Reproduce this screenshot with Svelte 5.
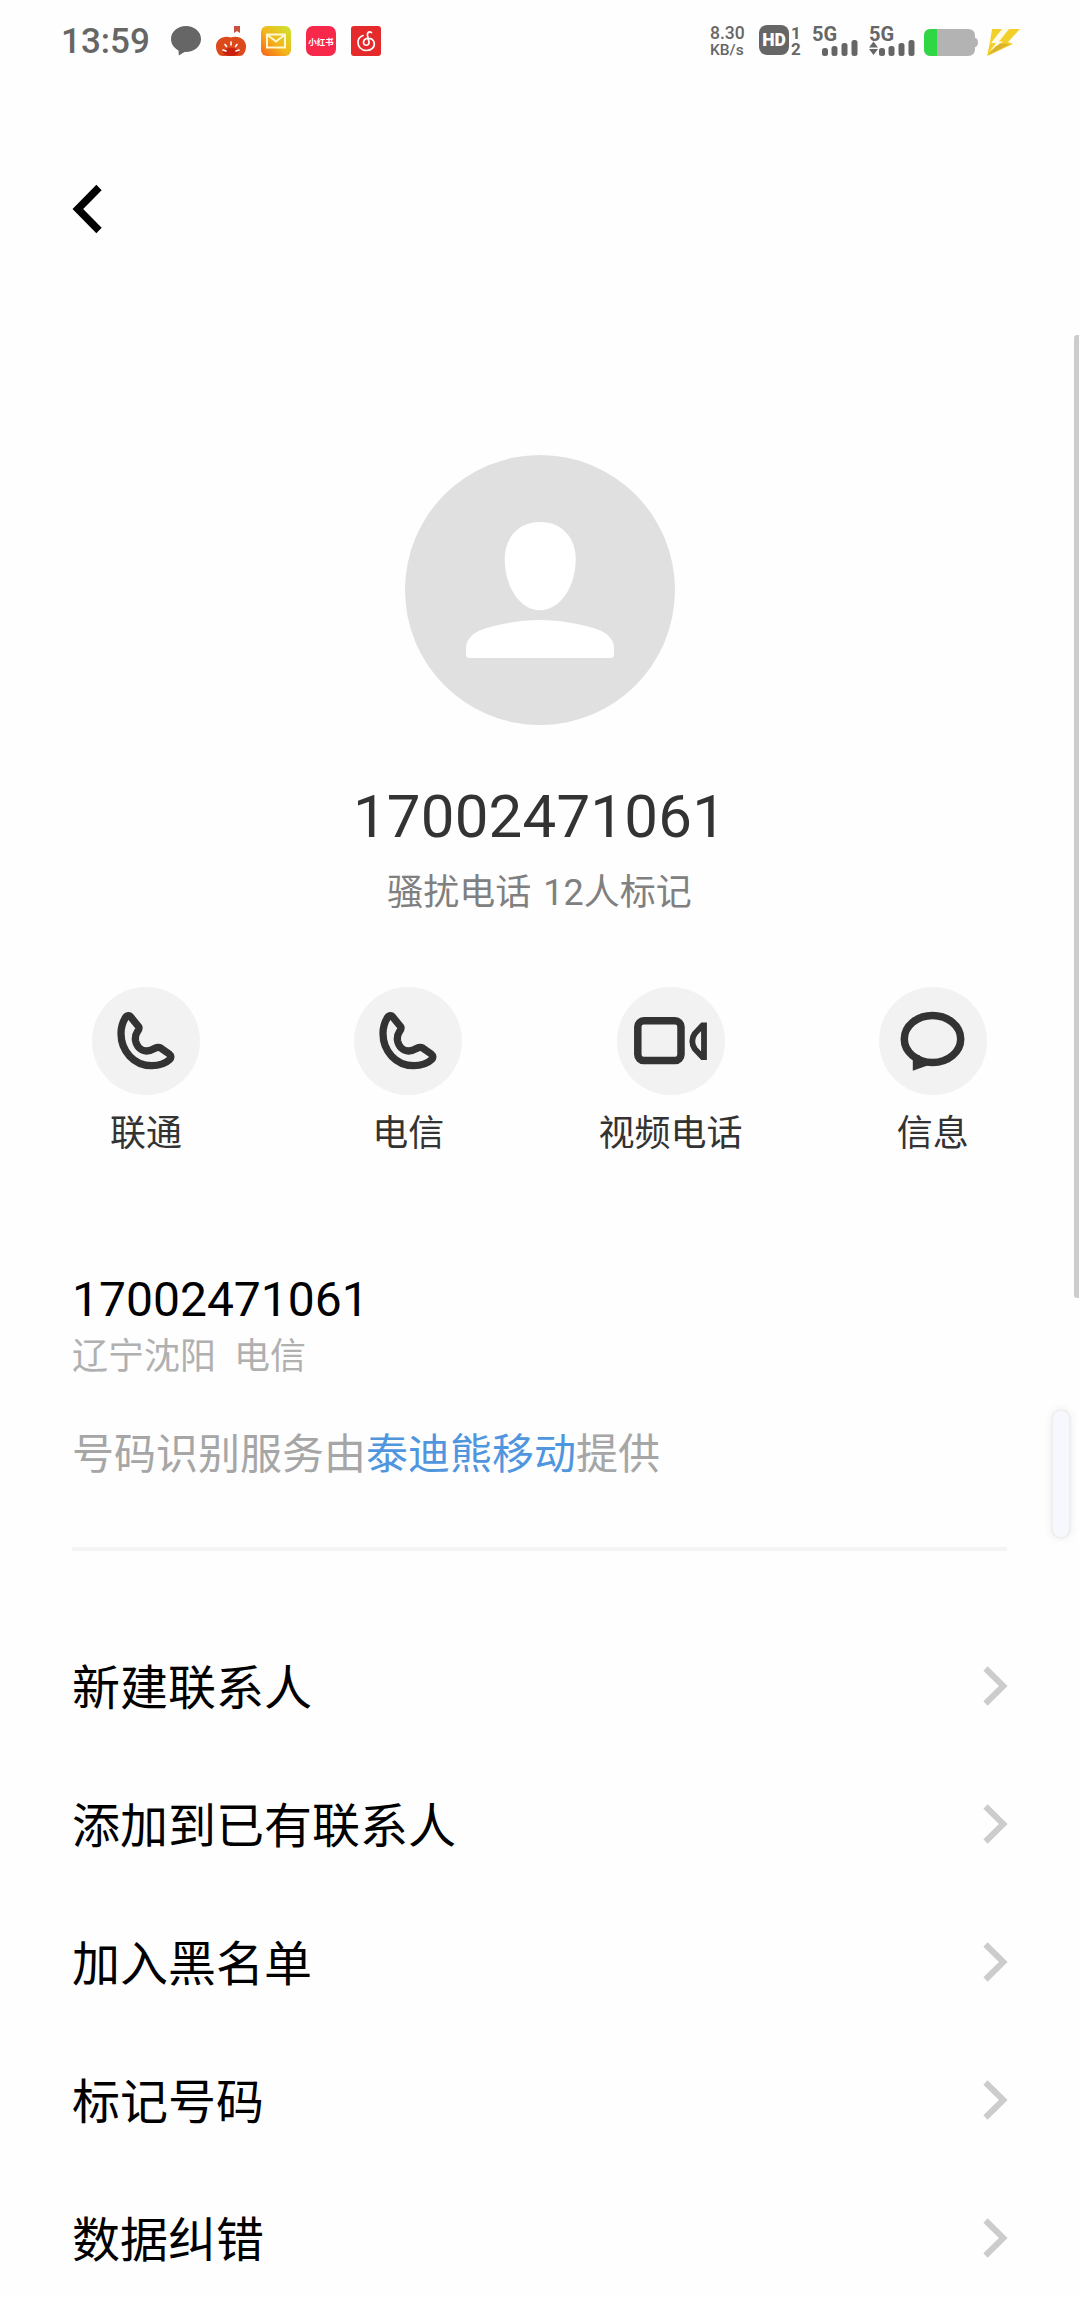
<script lang="ts">
  type ActionIcon = 'phone' | 'video' | 'message';

  const phoneNumber = '17002471061';

  const actions: { icon: ActionIcon; label: string }[] = [
    { icon: 'phone', label: '联通' },
    { icon: 'phone', label: '电信' },
    { icon: 'video', label: '视频电话' },
    { icon: 'message', label: '信息' }
  ];

  const menuItems = ['新建联系人', '添加到已有联系人', '加入黑名单', '标记号码', '数据纠错'];

  const bars = [
    { x: 10, h: 8 },
    { x: 19.5, h: 10 },
    { x: 29.5, h: 13 },
    { x: 39.5, h: 16 }
  ];
</script>

<div class="screen">
  <div class="status-bar">
    <span class="time">13:59</span>
    <div class="notifications">
      <svg width="30" height="30" viewBox="0 0 30 30">
        <path d="M15 0C6.700 0 0 5.600 0 13c0 5 3 9 7.500 11.500L7.800 29.500 13.500 26C23 26.500 30 20.500 30 13 30 5.600 23.300 0 15 0Z" fill="#666" />
      </svg>
      <svg width="32" height="30" viewBox="0 0 32 30">
        <path d="M19 0h6v7l-3-2-3 2z" fill="#c9503c" />
        <path d="M16 11.500C8 9 1 14 1 20c0 3 .5 5 1.500 6.500Q4 30 8 30h16q4 0 5.500-3.500C30.500 25 31 23 31 20c0-6-7-11-15-8.500Z" fill="#dc4a1c" />
        <ellipse cx="16" cy="26" rx="8" ry="4" fill="#c9210f" />
        <path d="M8 24l3 1M10 18.500l1.500 2M16 16v3M22 18.500l-1.500 2M24 24l-3 1" stroke="#fff" stroke-width="1.600" stroke-linecap="round" />
      </svg>
      <svg width="30" height="30" viewBox="0 0 30 30">
        <defs>
          <linearGradient id="mail" x1="0" y1="1" x2="1" y2="0">
            <stop offset="0" stop-color="#f6601c" />
            <stop offset="0.450" stop-color="#f5b21a" />
            <stop offset="1" stop-color="#c8e830" />
          </linearGradient>
        </defs>
        <rect width="30" height="30" rx="6" fill="url(#mail)" />
        <path d="M6 8.500h18v13H6zM6.500 9l8.500 6.500L23.500 9" fill="none" stroke="#fff8d0" stroke-width="2" />
      </svg>
      <svg width="30" height="30" viewBox="0 0 30 30">
        <rect width="30" height="30" rx="7" fill="#f8284a" />
        <text class="book" x="15" y="18.500" text-anchor="middle">小红书</text>
      </svg>
      <svg width="30" height="30" viewBox="0 0 30 30">
        <rect width="30" height="30" rx="3" fill="#e42a2a" />
        <path d="M20.500 6.500c-3-1.500-4.500.500-4 3l1.500 6.500c.5 4-5.500 4.500-5.500.5 0-5 8.500-6 10.500-.5 1.500 5-2.500 8.500-7.500 8.500-5.500 0-8.500-4-8.500-8 0-3.500 2-6 5-7" fill="none" stroke="#fff" stroke-width="1.700" stroke-linecap="round" />
      </svg>
    </div>

    <div class="indicators">
      <div class="speed">
        <span>8.30</span>
        <span class="unit">KB/s</span>
      </div>
      <div class="hd">
        <span class="badge">HD</span>
        <span class="sims"><span>1</span><span>2</span></span>
      </div>
      <div class="signal">
        <span class="network">5G</span>
        <svg width="46" height="16" viewBox="0 0 46 16">
          {#each bars as bar}
            <rect x={bar.x} y={16 - bar.h} width="6" height={bar.h} rx="2.500" fill="#666" />
          {/each}
        </svg>
      </div>
      <div class="signal">
        <span class="network">5G</span>
        <svg width="46" height="16" viewBox="0 0 46 16">
          <path d="M0 7.500l4.500-6L9 7.500zM0 9h9l-4.500 6z" fill="#666" />
          {#each bars as bar}
            <rect x={bar.x} y={16 - bar.h} width="6" height={bar.h} rx="2.500" fill="#666" />
          {/each}
        </svg>
      </div>
      <svg class="battery" width="54" height="27" viewBox="0 0 54 27">
        <path d="M7 0H44q7 0 7 7v2h1q2 1 2 4.500T52 18h-1v2q0 7-7 7H7q-7 0-7-7V7q0-7 7-7Z" fill="#b3b3b3" />
        <path d="M13 0H7Q0 0 0 7v13q0 7 7 7h6z" fill="#2fd744" />
      </svg>
      <svg class="bolt" width="34" height="27" viewBox="0 0 34 27">
        <path d="M5 0H33L21 13 26 15 0 27 3 13z" fill="#f3cf2a" />
        <path d="M15 0h7L12 12.500h4L3 22l6-8H4z" fill="#fffbe6" />
        <path d="M13 14.500l10 .5L1 26.500 8 18z" fill="#dcb42c" />
      </svg>
    </div>
  </div>

  <header class="header">
    <button class="back" aria-label="返回">
      <svg width="30" height="50" viewBox="0 0 30 50">
        <path d="M27 3.500 5.800 25 27 46.500" fill="none" stroke="#000" stroke-width="7.500" />
      </svg>
    </button>
  </header>

  <main>
    <section class="profile">
      <svg class="avatar" width="270" height="270" viewBox="0 0 270 270">
        <circle cx="135" cy="135" r="135" fill="#e0e0e0" />
        <path d="M135 67C113 67 99.700 83 99.700 104C99.700 133 116 155.300 135 155.300S170.700 133 170.700 104C170.700 83 157 67 135 67Z" fill="#fff" />
        <path d="M135 165C115 165 94 169 78.500 174C68 177.500 61 184.500 61 193V199.500Q61 203 64.500 203H205.500Q209 203 209 199.500V193C209 184.500 202 177.500 191.500 174C176 169 155 165 135 165Z" fill="#fff" />
      </svg>
      <h1>{phoneNumber}</h1>
      <p class="tag">骚扰电话 12人标记</p>
    </section>

    <div class="actions">
      {#each actions as action}
        <button class="action">
          <svg class="action-icon" width="108" height="108" viewBox="0 0 108 108" fill="none" stroke="#333">
            {#if action.icon === 'phone'}
              <path d="M36.500 28.700C38 28.700 39 30 40 31.500L46.500 39.500C47.800 41.200 47 42.500 45.500 44.500C43.500 47.500 43 50 43.500 53.500C44.500 59.500 49 64 54.500 64C58 64 60 63 63 61.300C65 60.200 67 60 69 61.200L77 66.800C79.500 68.800 79.300 71 77.500 72.700C73 77 66 78.700 59.700 78.700C42 78.700 29 64 29 46.500C29 40 31 34.500 33.500 30.500C34.300 29.200 35.300 28.700 36.500 28.700Z" stroke-width="7.300" />
            {:else if action.icon === 'video'}
              <rect x="20.800" y="33.800" width="43.200" height="39.800" rx="6" stroke-width="7.500" />
              <path d="M87 38.500V70H85.500L77.800 62C75.700 59 75.300 57.500 75.300 54.200S75.700 49.500 77.800 46.500L85.500 38.500Z" stroke-width="5.800" />
            {:else}
              <ellipse cx="53.500" cy="52" rx="28.200" ry="23.500" stroke-width="7.500" />
              <path d="M33.800 67.500V83.700L48.500 78.500L47 74.500L41 71.500L40.500 68Z" fill="#333" stroke="none" />
            {/if}
          </svg>
          <span>{action.label}</span>
        </button>
      {/each}
    </div>

    <section class="details">
      <p class="number">{phoneNumber}</p>
      <p class="location"><span>辽宁沈阳</span><span>电信</span></p>
      <p class="provider">号码识别服务由<span class="link">泰迪熊移动</span>提供</p>
    </section>

    <ul class="menu">
      {#each menuItems as item}
        <li>
          <span>{item}</span>
          <svg width="25" height="40" viewBox="0 0 25 40">
            <path d="M2.500 2.500 20.300 20 2.500 37.500" fill="none" stroke="#ccc" stroke-width="6" />
          </svg>
        </li>
      {/each}
    </ul>
  </main>

  <div class="scrollbar"></div>
  <div class="edge-handle"></div>
</div>

<style>
  :global(body) {
    background: #fefefe;
  }

  .screen {
    position: relative;
    width: 1079px;
    height: 2297px;
    overflow: hidden;
    background: #fefefe;
    font-family: Roboto, 'Noto Sans CJK SC', sans-serif;
  }

  svg {
    display: block;
    flex-shrink: 0;
  }

  h1,
  p,
  ul {
    margin: 0;
    padding: 0;
    font-weight: 400;
  }

  button {
    padding: 0;
    border: none;
    background: none;
    font: inherit;
  }

  .status-bar {
    display: flex;
    align-items: center;
    box-sizing: border-box;
    height: 82px;
    padding: 0 58px 0 61px;
    color: #666;
  }

  .time {
    width: 110px;
    padding-top: 2px;
    font-size: 35px;
    font-weight: 500;
    line-height: 40px;
  }

  .notifications {
    display: flex;
    gap: 15px;
  }

  .notifications svg:nth-child(2) {
    margin: 0 -1px;
  }

  .book {
    font-size: 8.5px;
    font-weight: 700;
    fill: #fff;
  }

  .indicators {
    display: flex;
    align-items: center;
    margin-left: auto;
  }

  .speed {
    display: flex;
    flex-direction: column;
    width: 49px;
    font-size: 17.5px;
    font-weight: 500;
    line-height: 17px;
  }

  .unit {
    font-size: 15.5px;
    line-height: 16px;
  }

  .hd {
    display: flex;
    gap: 2px;
    width: 43px;
    margin-right: 10px;
  }

  .badge {
    width: 30px;
    height: 30px;
    border-radius: 8px;
    background: #666;
    color: #fff;
    font-size: 17.5px;
    font-weight: 900;
    line-height: 31px;
    text-align: center;
  }

  .sims {
    display: flex;
    flex-direction: column;
    font-size: 17px;
    font-weight: 700;
    line-height: 16px;
    text-align: center;
  }

  .signal {
    width: 46px;
    margin-right: 11px;
  }

  .network {
    display: block;
    height: 14px;
    font-size: 20px;
    font-weight: 700;
    line-height: 16px;
  }

  .battery {
    margin: 2px 9px 0 -2px;
  }

  .bolt {
    margin-top: 2px;
  }

  .header {
    display: flex;
    align-items: center;
    height: 254px;
    padding-left: 72px;
  }

  .profile {
    display: flex;
    flex-direction: column;
    align-items: center;
    padding-top: 119px;
  }

  h1 {
    margin: 52px 0 1px;
    color: #333;
    font-size: 60px;
    line-height: 80px;
    letter-spacing: 0.2px;
  }

  .tag {
    color: #808080;
    font-size: 36px;
    line-height: 70px;
    word-spacing: 3px;
  }

  .actions {
    display: grid;
    grid-template-columns: repeat(4, 1fr);
    padding: 59px 15px 0;
  }

  .action {
    display: flex;
    flex-direction: column;
    align-items: center;
    gap: 3px;
    color: #333;
    font-size: 36px;
    line-height: 72px;
  }

  .action-icon {
    border-radius: 50%;
    background: #f2f2f2;
  }

  .details {
    height: 279px;
    margin: 0 72px;
    padding-top: 98px;
    border-bottom: 4px solid #f4f4f4;
  }

  .number {
    color: #000;
    font-size: 48px;
    line-height: 64px;
  }

  .location {
    display: flex;
    gap: 18px;
    margin-top: 1px;
    color: #b0b0b0;
    font-size: 36px;
    line-height: 48px;
  }

  .provider {
    margin-top: 42px;
    color: #a6a6a6;
    font-size: 42px;
    line-height: 64px;
  }

  .link {
    color: #5096de;
  }

  .menu {
    padding: 66px 71px 0 72px;
    list-style: none;
  }

  .menu li {
    display: flex;
    align-items: center;
    justify-content: space-between;
    height: 138px;
    color: #000;
    font-size: 48px;
  }

  .menu span {
    padding-bottom: 5px;
  }

  .scrollbar {
    position: absolute;
    top: 335px;
    right: 0;
    width: 5px;
    height: 963px;
    border-radius: 3px 0 0 3px;
    background: #cdcdcd;
  }

  .edge-handle {
    position: absolute;
    top: 1411px;
    right: 10px;
    width: 16px;
    height: 126px;
    border-radius: 9px;
    background: #f7f8fe;
    box-shadow: 0 0 0 2px #efefef, 0 0 8px 2px #eee;
  }
</style>
